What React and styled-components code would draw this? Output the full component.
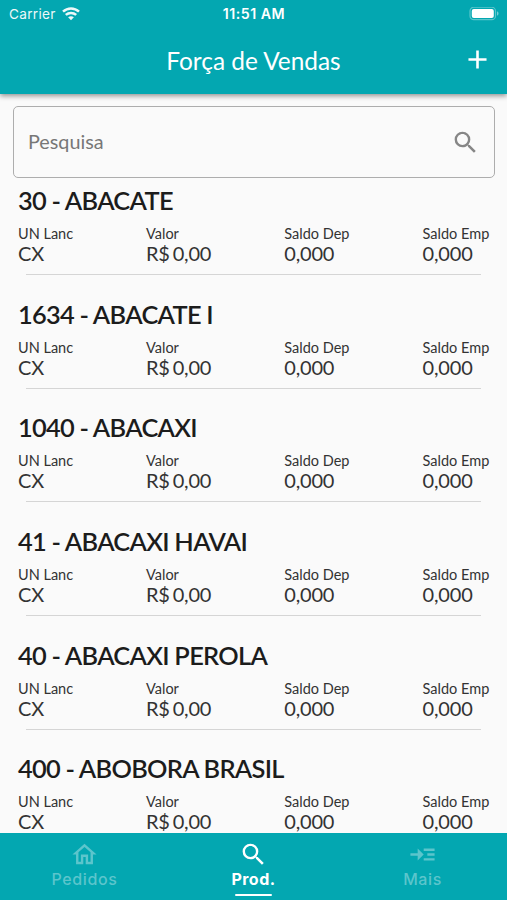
import styled, { createGlobalStyle } from "styled-components"
import { MdAdd, MdOutlineHome, MdReadMore, MdSearch } from "react-icons/md"

const colors = {
  primary: "#03a7b1",
  background: "#fafafa",
  inactive: "#5cc5cc",
}

const products = [
  { code: 30, name: "ABACATE" },
  { code: 1634, name: "ABACATE I" },
  { code: 1040, name: "ABACAXI" },
  { code: 41, name: "ABACAXI HAVAI" },
  { code: 40, name: "ABACAXI PEROLA" },
  { code: 400, name: "ABOBORA BRASIL" },
]

const GlobalStyle = createGlobalStyle`
  * {
    box-sizing: border-box;
  }
  body {
    margin: 0;
    font-family: Lato, "Liberation Sans", sans-serif;
    background: ${colors.background};
  }
`

const Screen = styled.div`
  display: flex;
  flex-direction: column;
  width: 507px;
  height: 900px;
  overflow: hidden;
  background: ${colors.background};
`

// Header
const Header = styled.header`
  flex: none;
  height: 94px;
  z-index: 1;
  color: #fff;
  background: ${colors.primary};
  box-shadow: 0 2px 5px rgba(0, 0, 0, 0.42);
`
const StatusBar = styled.div`
  display: grid;
  grid-template-columns: 1fr auto 1fr;
  align-items: center;
  height: 27px;
  padding: 0 8px 0 9px;
  font-family: Inter, sans-serif;
  font-size: 13.6px;
`
const Carrier = styled.div`
  display: flex;
  align-items: center;
  gap: 6px;
  letter-spacing: 0.3px;
  opacity: 0.93;
`
const Clock = styled.div`
  font-size: 14.2px;
  font-weight: 600;
  letter-spacing: 0.5px;
`
const BatteryIcon = styled.svg`
  justify-self: end;
`
const AppBar = styled.div`
  display: grid;
  grid-template-columns: 1fr auto 1fr;
  align-items: center;
  height: 67px;
  padding: 0 14px 0 14px;
`
const AppTitle = styled.h1`
  grid-column: 2;
  margin: 0;
  font-size: 24.4px;
  font-weight: 400;
  line-height: 30px;
`
const AddButton = styled.button`
  display: flex;
  justify-self: end;
  padding: 0;
  margin-top: -2px;
  border: 0;
  color: inherit;
  background: none;
  font-size: 31px;
`

// Product list
const Content = styled.main`
  flex: 1;
  min-height: 0;
  padding: 12px 12px 0 13px;
  overflow: hidden;
`
const SearchField = styled.label`
  display: flex;
  align-items: center;
  height: 72px;
  padding: 0 14px 0 14px;
  border: 1.5px solid #adadad;
  border-radius: 5px;
  color: #868686;
  font-size: 29px;
`
const SearchInput = styled.input`
  flex: 1;
  min-width: 0;
  padding: 0 0 2px;
  border: 0;
  outline: 0;
  background: none;
  font-family: inherit;
  font-size: 19.8px;
  &::placeholder {
    color: #777;
    opacity: 1;
  }
`
const Product = styled.article`
  height: 113.7px;
  padding: 8px 0 0 5px;
`
const ProductTitle = styled.h2`
  margin: 0;
  color: #1c1c1c;
  font-size: 25.4px;
  font-weight: 600;
  line-height: 28px;
  letter-spacing: -0.7px;
  word-spacing: -0.2px;
  white-space: nowrap;
`
const Fields = styled.div`
  display: grid;
  grid-template-columns: 128px 138.3px 138.3px auto;
  padding: 11px 0 10px;
  color: #333;
  white-space: nowrap;
`
const FieldLabel = styled.div`
  font-size: 14.5px;
  line-height: 18px;
`
const FieldValue = styled.div`
  font-size: 20px;
  line-height: 21px;
  letter-spacing: -0.2px;
  word-spacing: -2px;
`
const Divider = styled.hr`
  height: 1px;
  margin: 0 14px 0 8px;
  border: 0;
  background: #d5d5d5;
`

// Bottom navigation
const TabBar = styled.nav`
  flex: none;
  display: grid;
  grid-template-columns: repeat(3, 1fr);
  height: 67px;
  background: ${colors.primary};
`
const Tab = styled.button`
  display: flex;
  flex-direction: column;
  align-items: center;
  padding: 8px 0 0;
  border: 0;
  color: ${({ $active }) => ($active ? "#fff" : colors.inactive)};
  background: none;
  font-family: Inter, sans-serif;
  font-size: 16px;
  font-weight: ${({ $active }) => ($active ? 650 : 500)};
  letter-spacing: ${({ $active }) => ($active ? "0.5px" : "0.6px")};
  line-height: 22px;
`
const TabIcon = styled.span`
  display: flex;
  align-items: center;
  justify-content: center;
  height: 27px;
  font-size: 29px;
`
const Indicator = styled.span`
  width: 37px;
  height: 2px;
  margin-top: 4px;
  border-radius: 1px;
  background: #fff;
`

function WifiIcon() {
  return (
    <svg width="18" height="14" viewBox="0 0 18 14" fill="none" stroke="#fff" strokeWidth="2.5">
      <path d="M1 4.6C5.6.3 12.4.3 17 4.6" />
      <path d="M3.8 7.9c3-2.7 7.4-2.7 10.4 0" />
      <path d="M6.1 10.3c1.7-1.4 4.1-1.4 5.8 0L9 13.3z" fill="#fff" stroke="none" />
    </svg>
  )
}

function Battery() {
  return (
    <BatteryIcon width="30" height="14" viewBox="0 0 30 14">
      <rect x="1" y=".2" width="25.5" height="12.5" rx="3.8" fill="none" stroke="#fff" strokeOpacity=".35" strokeWidth="1.2" />
      <rect x="2.8" y="2" width="22" height="9" rx="2" fill="#fff" />
      <path d="M28 4.2c2 .8 2 3.7 0 4.5z" fill="#fff" fillOpacity=".45" />
    </BatteryIcon>
  )
}

function ProductItem({ code, name }) {
  const fields = [
    ["UN Lanc", "CX"],
    ["Valor", "R$ 0,00"],
    ["Saldo Dep", "0,000"],
    ["Saldo Emp", "0,000"],
  ]
  return (
    <Product>
      <ProductTitle>{`${code} - ${name}`}</ProductTitle>
      <Fields>
        {fields.map(([label, value]) => (
          <div key={label}>
            <FieldLabel>{label}</FieldLabel>
            <FieldValue>{value}</FieldValue>
          </div>
        ))}
      </Fields>
      <Divider />
    </Product>
  )
}

function App() {
  return (
    <Screen>
      <GlobalStyle />
      <Header>
        <StatusBar>
          <Carrier>
            Carrier
            <WifiIcon />
          </Carrier>
          <Clock>11:51 AM</Clock>
          <Battery />
        </StatusBar>
        <AppBar>
          <AppTitle>Força de Vendas</AppTitle>
          <AddButton>
            <MdAdd />
          </AddButton>
        </AppBar>
      </Header>
      <Content>
        <SearchField>
          <SearchInput placeholder="Pesquisa" />
          <MdSearch />
        </SearchField>
        {products.map((product) => (
          <ProductItem key={product.code} {...product} />
        ))}
      </Content>
      <TabBar>
        <Tab>
          <TabIcon>
            <MdOutlineHome />
          </TabIcon>
          Pedidos
        </Tab>
        <Tab $active>
          <TabIcon>
            <MdSearch />
          </TabIcon>
          Prod.
          <Indicator />
        </Tab>
        <Tab>
          <TabIcon>
            <MdReadMore />
          </TabIcon>
          Mais
        </Tab>
      </TabBar>
    </Screen>
  )
}

export default App
